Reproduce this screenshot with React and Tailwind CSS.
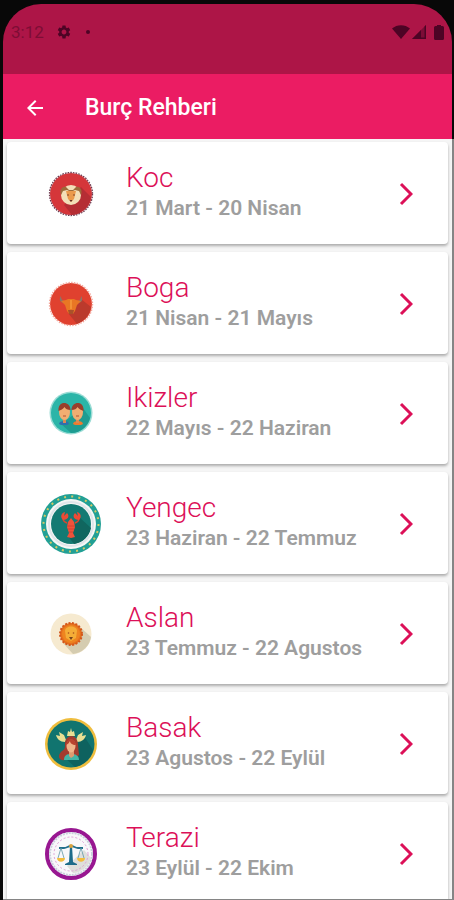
import { MdArrowBack, MdSettings } from 'react-icons/md'

const Aries = () => (
  <>
    <circle cx="30" cy="30" r="21" fill="#d5363a" />
    <path d="M40 23 L50 33 A21 21 0 0 1 31 51 L23 41 Z" fill="#b52d34" />
    <circle cx="30" cy="30" r="21.5" fill="none" stroke="#6f3a50" strokeWidth="1.3" strokeDasharray="1.6 1.1" />
    <circle cx="30" cy="31" r="10" fill="#f3dfb8" />
    <path d="M20 31c-2-6 2-9 5-8l3 3h4l3-3c3-1 7 2 5 8l-2-4-4-1-4 2-4-2-4 1z" fill="#9c6b3b" />
    <path d="M25 27h10l-2 8-3 3-3-3z" fill="#eb9a4c" />
    <circle cx="27" cy="31" r="0.8" fill="#7a3b25" />
    <circle cx="33" cy="31" r="0.8" fill="#7a3b25" />
    <path d="M28.500 36h3l-1.500 2z" fill="#5b2b25" />
  </>
)

const Taurus = () => (
  <>
    <circle cx="30" cy="30" r="21" fill="#e0412f" />
    <path d="M40 25 L50 33 A21 21 0 0 1 36 50 L27 39 Z" fill="#bb3a2c" />
    <circle cx="30" cy="30" r="21.500" fill="none" stroke="#f3a79c" strokeWidth="1.400" strokeDasharray="1.500 1.300" />
    <path d="M20 22c-3 4 0 8 5 7v-2c-3 0-5-1-5-5zM40 22c3 4 0 8-5 7v-2c3 0 5-1 5-5z" fill="#8c7468" />
    <path d="M20 27l5-1 2-1h6l2 1 5 1-4 4-2 6-2 3h-4l-2-3-2-6z" fill="#e97724" />
    <path d="M27 36h6l-1 4h-4z" fill="#a9512a" />
    <path d="M29 26h2v9h-2z" fill="#f39236" />
  </>
)

const Gemini = () => (
  <>
    <circle cx="30" cy="29" r="21.500" fill="#9bdcd5" />
    <circle cx="30" cy="29" r="20" fill="#2bb5a8" />
    <path d="M42 24 L49 34 A20 20 0 0 1 30 49 L20 40 Z" fill="#1e9c91" />
    <path d="M18 40c0-4 10-4 10 0l-2 1h-6z" fill="#2f6fae" />
    <path d="M32 40c0-4 10-4 10 0l-2 1h-6z" fill="#ee7b2f" />
    <path d="M22 34h3v5h-3zM35 34h3v5h-3z" fill="#d98a55" />
    <ellipse cx="23.500" cy="28" rx="5.500" ry="8" fill="#f2ae72" />
    <ellipse cx="36.500" cy="28" rx="5.500" ry="8" fill="#f2ae72" />
    <path d="M17.500 27c-1-11 12-10 12-1-3 0-5-1-6-3-1 2-4 3-6 4zM30.500 26c0-9 13-10 12 1-2-1-5-2-6-4-1 2-3 3-6 3z" fill="#993f2b" />
    <path d="M22 32h3M35 32h3" stroke="#b55332" strokeWidth="1" />
  </>
)

const Cancer = () => (
  <>
    <circle cx="30" cy="30" r="30" fill="#22a095" />
    <circle cx="30" cy="30" r="27.500" fill="none" stroke="#d3c966" strokeWidth="2" strokeDasharray="2 5.200" />
    <circle cx="30" cy="30" r="25" fill="#f6f7f6" />
    <circle cx="30" cy="30" r="22" fill="none" stroke="#dfe6ea" strokeWidth="2" />
    <circle cx="30" cy="30" r="20" fill="#137a73" />
    <path d="M38 23 L50 34 A20 20 0 0 1 33 50 L27 42 Z" fill="#10665f" />
    <path d="M26 29c-3-1-4-3-4-5M34 29c3-1 4-3 4-5" fill="none" stroke="#d9452f" strokeWidth="1.500" />
    <path d="M22 26c-3-3-2-7 2-8l-1 4 3-3c3 3 1 7-4 7zM38 26c3-3 2-7-2-8l1 4-3-3c-3 3-1 7 4 7z" fill="#ee4a34" />
    <path d="M30 24l3 4 1 5-2 6 2 4-4 1-4-1 2-4-2-6 1-5z" fill="#f0523a" />
    <path d="M26 32h8M27 35h6M28 38h4" stroke="#c73d2d" strokeWidth="0.800" />
  </>
)

const Leo = () => (
  <>
    <circle cx="30" cy="30" r="20.500" fill="#f6ead0" />
    <path d="M39 23 L50 33 A20 20 0 0 1 32 50 L22 39 Z" fill="#d5ccb0" />
    <circle cx="30" cy="30" r="11" fill="#e5701d" stroke="#d3571b" strokeWidth="2" strokeDasharray="2 1.500" />
    <circle cx="30" cy="30" r="9" fill="#ee8420" />
    <path d="M24 27c0-6 12-6 12 0l-1 7-5 3-5-3z" fill="#f4ad37" />
    <circle cx="27.500" cy="29" r="0.800" fill="#a14d1c" />
    <circle cx="32.500" cy="29" r="0.800" fill="#a14d1c" />
    <path d="M28 33h4l-2 3z" fill="#78441e" />
  </>
)

const Virgo = () => (
  <>
    <circle cx="30" cy="30" r="26" fill="#efbd3e" />
    <circle cx="30" cy="30" r="23.500" fill="#11746f" />
    <path d="M43 22 L52 36 A23.500 23.500 0 0 1 34 53 L24 44 Z" fill="#0e625f" />
    <path d="M24 28c-5 0-8-3-9-7l4 1-1-4 5 3 2 5zM36 28c5 0 8-3 9-7l-4 1 1-4-5 3-2 5zM26 22l1-5 2 1 1-4 1 4 2-1 1 5z" fill="#e8df93" />
    <path d="M24 32c-1-13 13-13 13-1l1 10-5 4-9 1c-6 1-8-4-4-8 2-2 4-2 4-6z" fill="#a43b2e" />
    <path d="M23 46c0-5 3-6 7-6s8 1 8 6z" fill="#43b5a6" />
    <path d="M28 35h5v7l-3 2-2-2z" fill="#dd9a70" />
    <ellipse cx="30" cy="32" rx="4.500" ry="6.500" fill="#f0b48a" />
    <path d="M25 31c1-8 9-8 10 0-4 0-6-2-6-4-1 2-2 3-4 4z" fill="#b9432f" />
  </>
)

const Libra = () => (
  <>
    <circle cx="30" cy="30" r="24" fill="#f8f8fa" stroke="#981791" strokeWidth="4" />
    <circle cx="30" cy="30" r="21" fill="none" stroke="#c9cfdc" strokeWidth="2" strokeDasharray="2 1" />
    <path d="M43 26 L50 34 A20 20 0 0 1 32 49 L26 42 Z" fill="#dedfdb" />
    <circle cx="30" cy="30" r="17" fill="none" stroke="#dfa0d5" strokeWidth="1" strokeDasharray="2 2" />
    <path d="M18 24h5c3 0 4-2 7-2s4 2 7 2h5" fill="none" stroke="#226f8c" strokeWidth="1.800" />
    <path d="M20 24l-3 10M20 24l3 10M40 24l-3 10M40 24l3 10" stroke="#5d95a5" strokeWidth="0.800" />
    <path d="M29 22h2l1 16 4 2v1H24v-1l4-2z" fill="#1d6c8a" />
    <path d="M16 34h8c0 5-8 5-8 0zM36 34h8c0 5-8 5-8 0z" fill="#f2bd3d" />
    <circle cx="30" cy="22" r="2" fill="#d8a23e" />
  </>
)

const signs = [
  { name: 'Koc', dates: '21 Mart - 20 Nisan', Icon: Aries },
  { name: 'Boga', dates: '21 Nisan - 21 Mayıs', Icon: Taurus },
  { name: 'Ikizler', dates: '22 Mayıs - 22 Haziran', Icon: Gemini },
  { name: 'Yengec', dates: '23 Haziran - 22 Temmuz', Icon: Cancer },
  { name: 'Aslan', dates: '23 Temmuz - 22 Agustos', Icon: Leo },
  { name: 'Basak', dates: '23 Agustos - 22 Eylül', Icon: Virgo },
  { name: 'Terazi', dates: '23 Eylül - 22 Ekim', Icon: Libra },
]

const StatusBar = () => (
  <div className="flex h-[70px] items-start justify-between bg-[#ad1547] pt-5 pr-2 pl-2 text-[#4d0425]">
    <div className="flex h-4 items-center">
      <span className="text-[17px] leading-4 text-[#7d0d35]">3:12</span>
      <MdSettings className="ml-3 h-4 w-4" />
      <span className="ml-3.5 h-1 w-1 rounded-full bg-[#4d0425]" />
    </div>
    <div className="flex h-4 items-center">
      <svg viewBox="0 0 18 14" className="h-[14px] w-[18px]" fill="currentColor">
        <path d="M0 3.500C5-1 13-1 18 3.500L9 14z" />
      </svg>
      <svg viewBox="0 0 14 14" className="ml-0.5 h-[14px] w-[14px]" fill="currentColor">
        <path d="M0 14L14 0v14z" opacity="0.500" />
        <path d="M0 14L9 5v9zM12.500 1.500L14 0v14H9v-1.500h3.500z" />
      </svg>
      <svg viewBox="0 0 10 15" className="ml-2 h-[15px] w-[10px]" fill="currentColor">
        <path d="M3 0h4v1h1.500Q10 1 10 2.500v11Q10 15 8.500 15h-7Q0 15 0 13.500v-11Q0 1 1.500 1H3z" />
      </svg>
    </div>
  </div>
)

const SignCard = ({ name, dates, Icon }) => (
  <li>
    <a
      href="#"
      className="flex h-[102px] items-center rounded bg-white pt-0.5 pr-[35px] pl-[34px] shadow-[0_2px_3px_rgba(0,0,0,0.3)]"
    >
      <svg viewBox="0 0 60 60" className="h-[60px] w-[60px] shrink-0" aria-hidden="true">
        <Icon />
      </svg>
      <div className="ml-[25px] grow pb-1.5 whitespace-nowrap">
        <h2 className="text-[28px] leading-8 font-light text-[#dc1058]">{name}</h2>
        <p className="mt-0.5 text-[21px] leading-6 font-semibold text-[#9e9e9e]">{dates}</p>
      </div>
      <svg
        viewBox="0 0 14 24"
        className="h-6 w-[14px] shrink-0"
        fill="none"
        stroke="#dc1058"
        strokeWidth="3"
        aria-hidden="true"
      >
        <path d="M2 2L12 12L2 22" />
      </svg>
    </a>
  </li>
)

const App = () => {
  return (
    <div className="flex h-screen flex-col bg-[#080808] pt-1 pl-[3px] font-[Roboto,sans-serif]">
      <header className="mr-0.5 shrink-0 overflow-hidden rounded-t-[38px]">
        <StatusBar />
        <div className="flex h-[65px] items-center bg-[#eb1c63] pt-0.5 pl-5 text-white">
          <button type="button" aria-label="Geri">
            <MdArrowBack className="h-6 w-6" />
          </button>
          <h1 className="ml-[38px] text-[23px] leading-7 font-medium">Burç Rehberi</h1>
        </div>
      </header>
      <main className="min-h-0 grow overflow-y-auto border-r-2 border-b border-[#858585] bg-[#f5f5f5] [scrollbar-width:none]">
        <ul className="flex flex-col gap-2 px-1 pt-[3px] pb-2">
          {signs.map(sign => (
            <SignCard key={sign.name} {...sign} />
          ))}
        </ul>
      </main>
    </div>
  )
}

export default App
